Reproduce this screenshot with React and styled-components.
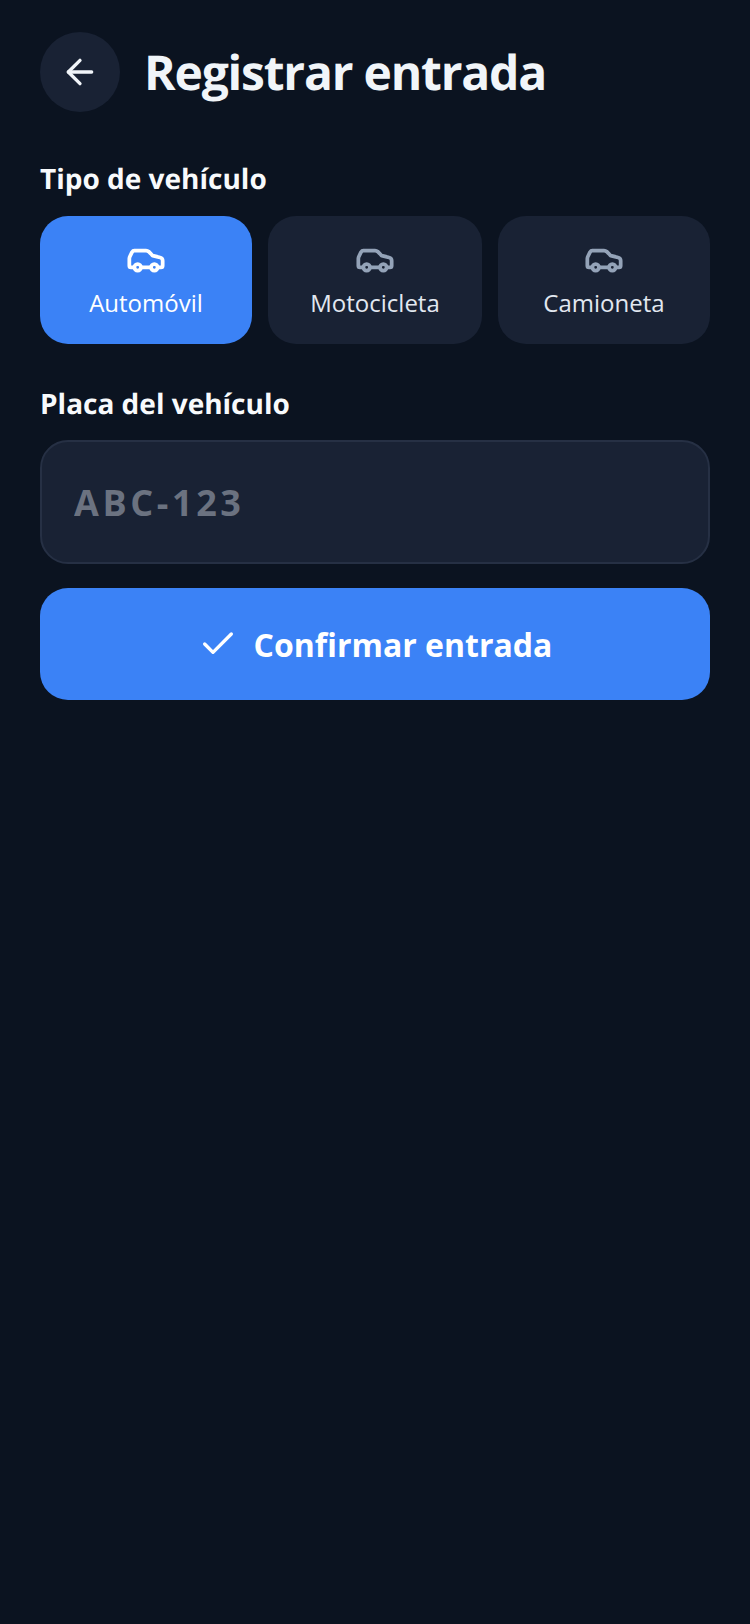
import styled, { createGlobalStyle } from "styled-components"
import { ArrowLeft, Car, Check } from "lucide-react"

const GlobalStyle = createGlobalStyle`
  html, body {
    margin: 0;
    padding: 0;
    background: #0b1320;
  }
  * {
    box-sizing: border-box;
  }
`

const Screen = styled.main`
  min-height: 1624px;
  padding: 32px 40px;
  background: #0b1320;
  font-family: "Open Sans", "Noto Sans", sans-serif;
  color: #fff;
  text-rendering: geometricPrecision;
`

const Header = styled.header`
  display: flex;
  align-items: center;
  gap: 24px;
  margin-bottom: 48px;
`

const BackButton = styled.button`
  display: flex;
  align-items: center;
  justify-content: center;
  width: 80px;
  height: 80px;
  padding: 0;
  border: none;
  border-radius: 50%;
  background: #192234;
  color: #f1f5f9;
`

const Title = styled.h1`
  margin: 0;
  padding-top: 2px;
  font-size: 48px;
  line-height: 64px;
  font-weight: 700;
  letter-spacing: -1.2px;
  color: #f1f5f9;
`

const Label = styled.label`
  display: block;
  margin-bottom: ${(p) => (p.$tight ? "17px" : "18px")};
  font-size: 28px;
  line-height: 38px;
  font-weight: 700;
  color: #f8fafc;
`

const TypeRow = styled.div`
  display: grid;
  grid-template-columns: 212px 214px 212px;
  gap: 16px;
  margin-bottom: 41px;
`

const TypeTile = styled.button`
  display: flex;
  flex-direction: column;
  align-items: center;
  justify-content: center;
  gap: 8px;
  height: 128px;
  padding: 0 0 3px;
  border: none;
  border-radius: 28px;
  background: ${(p) => (p.$active ? "#3b82f6" : "#192234")};
  color: ${(p) => (p.$active ? "#ffffff" : "#94a3b8")};
  font-family: inherit;
`

const TileText = styled.span`
  font-size: 24px;
  line-height: 32px;
  color: ${(p) => (p.$active ? "#ffffff" : "#e2e8f0")};
`

const PlateInput = styled.input`
  display: block;
  width: 100%;
  height: 124px;
  margin-bottom: 24px;
  padding: 0 32px;
  border: 2px solid #263044;
  border-radius: 28px;
  background: #192234;
  color: #f8fafc;
  font-family: inherit;
  font-size: 36px;
  font-weight: 700;
  letter-spacing: 3.6px;
  outline: none;

  &::placeholder {
    color: #6b7280;
    opacity: 1;
  }
`

const ConfirmButton = styled.button`
  display: flex;
  align-items: center;
  justify-content: center;
  gap: 16px;
  width: 100%;
  height: 112px;
  padding: 0;
  border: none;
  border-radius: 28px;
  background: #3b82f6;
  color: #fff;
  font-family: inherit;
  font-size: 32px;
  font-weight: 700;
`

const vehicleTypes = ["Automóvil", "Motocicleta", "Camioneta"]

export default function App() {
  return (
    <>
      <GlobalStyle />
      <Screen>
        <Header>
          <BackButton aria-label="Volver">
            <ArrowLeft size={40} strokeWidth={2} />
          </BackButton>
          <Title>Registrar entrada</Title>
        </Header>

        <Label>Tipo de vehículo</Label>
        <TypeRow>
          {vehicleTypes.map((name, index) => (
            <TypeTile key={name} $active={index === 0}>
              <Car size={40} strokeWidth={2.25} />
              <TileText $active={index === 0}>{name}</TileText>
            </TypeTile>
          ))}
        </TypeRow>

        <Label $tight>Placa del vehículo</Label>
        <PlateInput placeholder="ABC-123" />

        <ConfirmButton>
          <Check size={40} strokeWidth={2} />
          Confirmar entrada
        </ConfirmButton>
      </Screen>
    </>
  )
}
